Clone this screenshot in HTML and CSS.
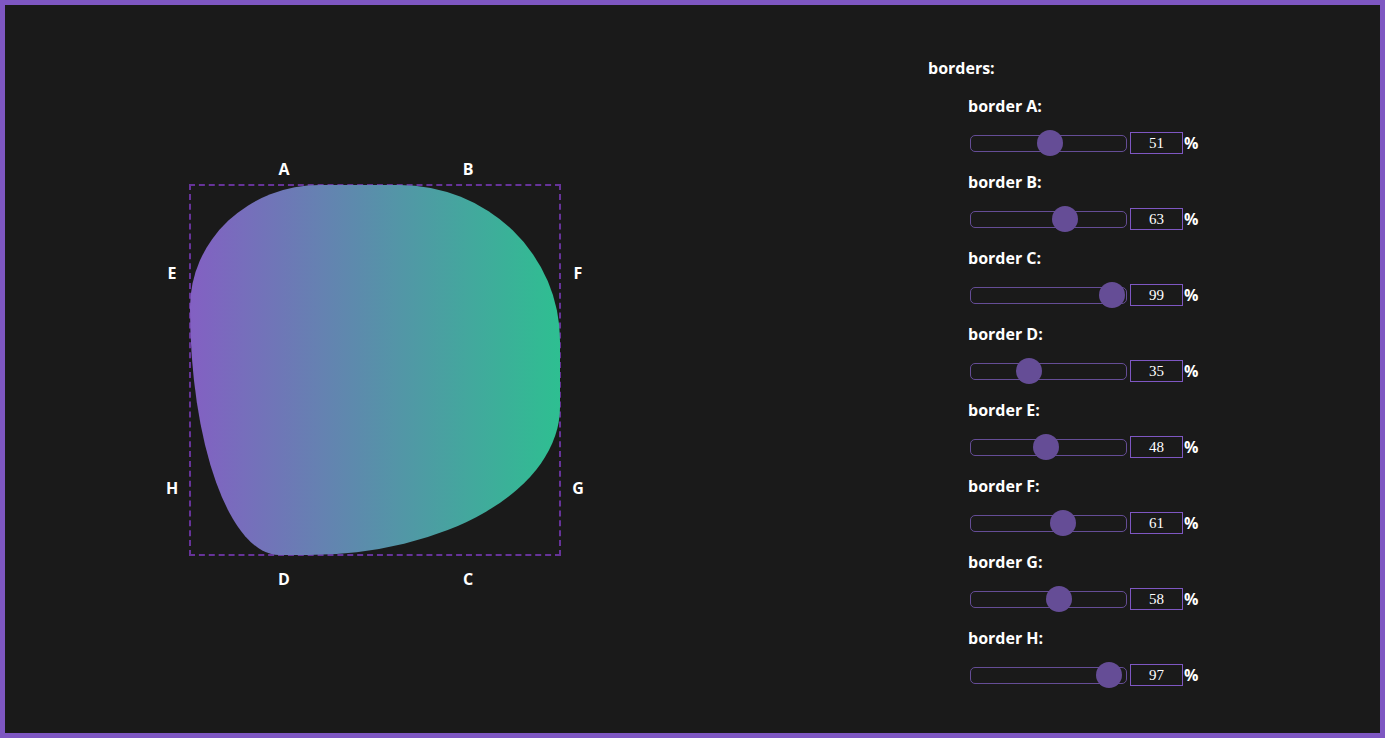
FILE: index.html
```html
<!DOCTYPE html>
<html lang="en">
<head>
<meta charset="utf-8">
<title>Fancy border radius</title>
<link rel="stylesheet" href="styles.css">
</head>
<body>
<main class="app">
  <section class="stage">
    <div class="shape"></div>
    <span class="mark mark-a">A</span>
    <span class="mark mark-b">B</span>
    <span class="mark mark-c">C</span>
    <span class="mark mark-d">D</span>
    <span class="mark mark-e">E</span>
    <span class="mark mark-f">F</span>
    <span class="mark mark-g">G</span>
    <span class="mark mark-h">H</span>
  </section>
  <section class="panel">
    <div class="title">borders:</div>
    <div class="fields">
      <div class="field"><label class="label">border A:</label><div class="control"><input class="range" type="range" min="0" max="100" value="51"><input class="num" type="number" value="51"><span class="pct">%</span></div></div>
      <div class="field"><label class="label">border B:</label><div class="control"><input class="range" type="range" min="0" max="100" value="63"><input class="num" type="number" value="63"><span class="pct">%</span></div></div>
      <div class="field"><label class="label">border C:</label><div class="control"><input class="range" type="range" min="0" max="100" value="99"><input class="num" type="number" value="99"><span class="pct">%</span></div></div>
      <div class="field"><label class="label">border D:</label><div class="control"><input class="range" type="range" min="0" max="100" value="35"><input class="num" type="number" value="35"><span class="pct">%</span></div></div>
      <div class="field"><label class="label">border E:</label><div class="control"><input class="range" type="range" min="0" max="100" value="48"><input class="num" type="number" value="48"><span class="pct">%</span></div></div>
      <div class="field"><label class="label">border F:</label><div class="control"><input class="range" type="range" min="0" max="100" value="61"><input class="num" type="number" value="61"><span class="pct">%</span></div></div>
      <div class="field"><label class="label">border G:</label><div class="control"><input class="range" type="range" min="0" max="100" value="58"><input class="num" type="number" value="58"><span class="pct">%</span></div></div>
      <div class="field"><label class="label">border H:</label><div class="control"><input class="range" type="range" min="0" max="100" value="97"><input class="num" type="number" value="97"><span class="pct">%</span></div></div>
    </div>
  </section>
</main>
</body>
</html>
```
FILE: styles.css
```css
* { box-sizing: border-box; }
html, body { margin: 0; padding: 0; background: #1a1a1a; }
body {
  font-family: "Comic Sans MS", "Open Sans", sans-serif;
  font-weight: 700;
  color: #fff;
}
.app {
  height: 100vh;
  border: 5px solid #7e57c2;
  display: flex;
  align-items: center;
}
.stage {
  position: relative;
  width: 372px;
  height: 372px;
  margin-left: 184px;
  margin-top: 2px;
  border: 2px dashed #663399;
  flex-shrink: 0;
}
.shape {
  width: 370px;
  height: 370px;
  margin: -1px;
  border-radius: 51% 63% 99% 35% / 48% 61% 58% 97%;
  background: linear-gradient(to right, #8360c3, #2ebf91);
}
.mark {
  position: absolute;
  width: 20px;
  line-height: 20px;
  text-align: center;
  font-size: 16px;
}
.mark-a { left: 83px; top: -27px; }
.mark-b { left: 267px; top: -27px; }
.mark-d { left: 83px; top: 383px; }
.mark-c { left: 267px; top: 383px; }
.mark-e { left: -29px; top: 77px; }
.mark-f { left: 377px; top: 77px; }
.mark-h { left: -29px; top: 292px; }
.mark-g { left: 377px; top: 292px; }

.panel {
  margin-left: 367px;
  padding-top: 7px;
  display: flex;
  flex-direction: column;
  gap: 16px;
}
.title, .label {
  font-size: 16px;
  line-height: 22px;
  height: 22px;
}
.fields {
  padding-left: 40px;
  display: flex;
  flex-direction: column;
  gap: 15px;
}
.field {
  display: flex;
  flex-direction: column;
  gap: 13px;
}
.control {
  display: flex;
  align-items: center;
  height: 26px;
}
.range {
  -webkit-appearance: none;
  appearance: none;
  width: 157px;
  height: 26px;
  margin: 0 0 0 2px;
  padding: 0;
  background: transparent;
}
.range::-webkit-slider-runnable-track {
  height: 17px;
  border: 1px solid #654d96;
  border-radius: 5px;
  background: transparent;
  box-sizing: border-box;
}
.range::-webkit-slider-thumb {
  -webkit-appearance: none;
  appearance: none;
  width: 26px;
  height: 26px;
  border-radius: 50%;
  background: #654d96;
  border: none;
  margin-top: -5.5px;
}
.num {
  width: 53px;
  height: 22px;
  margin-left: 3px;
  padding: 0;
  border: 1px solid #7e57c2;
  background: transparent;
  color: #fff;
  font-family: "Liberation Serif", "Times New Roman", serif;
  font-weight: 400;
  font-size: 15px;
  text-align: center;
  -moz-appearance: textfield;
}
.num::-webkit-inner-spin-button,
.num::-webkit-outer-spin-button {
  -webkit-appearance: none;
  margin: 0;
}
.pct {
  margin-left: 1px;
  font-size: 16px;
}
```
